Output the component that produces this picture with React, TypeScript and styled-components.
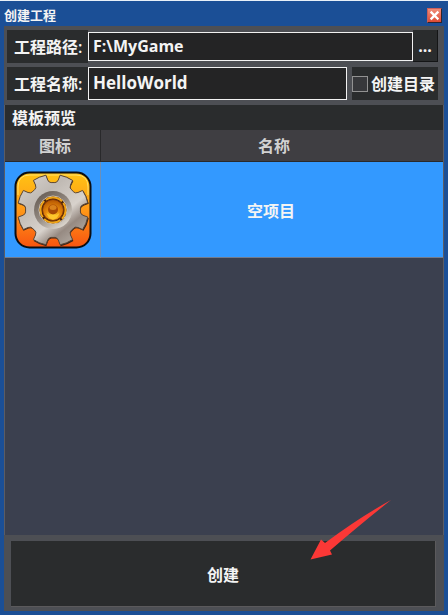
import React, { useState } from "react";
import styled, { createGlobalStyle } from "styled-components";

const Global = createGlobalStyle`
  * { box-sizing: border-box; }
  body { margin: 0; background: #1b4f96; }
  body, button, input, table {
    font-family: "Open Sans", "Noto Sans CJK SC", sans-serif;
    font-size: 16px;
    font-weight: 600;
    line-height: 24px;
    color: #f4f4f4;
  }
`;

const Dialog = styled.main`
  display: flex;
  flex-direction: column;
  min-height: 100vh;
  padding: 0 4px 4px;
  border-top: 1px solid #e8f0f8;
  background: #1b4f96;
`;

const TitleBar = styled.header`
  display: flex;
  align-items: center;
  justify-content: space-between;
  height: 25px;
  padding: 3px 2px 0 0;
`;

const Title = styled.h1`
  margin: 0;
  font-size: 13px;
  line-height: 20px;
  font-weight: 600;
`;

const CloseButton = styled.button`
  display: flex;
  padding: 0;
  border: 1px solid #30242c;
  border-color: #c9605c #30242c #30242c #c9605c;
  background: linear-gradient(#f08c78, #dc4a34);
`;

const Body = styled.form`
  flex: 1;
  display: flex;
  flex-direction: column;
  background: #4d4f54;
`;

const Fields = styled.div`
  display: flex;
  flex-direction: column;
  gap: 4px;
  padding: 4px 6px 5px 3px;
`;

const FieldRow = styled.div`
  display: flex;
  height: 33px;
`;

const FieldLabel = styled.label`
  flex: none;
  display: flex;
  align-items: center;
  width: 81px;
  padding-left: 7px;
  background: #2a2c2d;
`;

const TextBox = styled.input<{ $compact?: boolean }>`
  flex: 1;
  min-width: 0;
  margin: ${(p) => (p.$compact ? "2px 0" : "0")};
  padding: 0 4px 2px;
  border: 1px solid #f2f2f2;
  border-radius: 0;
  outline: none;
  font-size: ${(p) => (p.$compact ? "16px" : "17px")};
  font-weight: 700;
  background: #242425;
`;

const BrowseButton = styled.button`
  flex: none;
  width: 25px;
  margin-bottom: 1px;
  padding: 0;
  border: solid #141516;
  border-width: 0 1px 1px 0;
  font-weight: 700;
  background: #2a2c2d;
`;

const CheckLabel = styled.label`
  flex: none;
  display: flex;
  align-items: center;
  gap: 3px;
  width: 86px;
  margin-left: 5px;
  background: #2a2c2d;
`;

const Checkbox = styled.input`
  appearance: none;
  flex: none;
  width: 16px;
  height: 16px;
  margin: 0;
  border: 1px solid #929292;
  background: #37383b;
  &:checked { background: #3399ff; }
`;

const Preview = styled.section`
  flex: 1;
  display: flex;
  flex-direction: column;
  background: #3b404f;
  border: solid #5b5c63;
  border-width: 0 1px 0 1px;
`;

const PreviewTitle = styled.h2`
  margin: 0;
  padding: 1px 7px 0;
  font-size: 16px;
  line-height: 24px;
  font-weight: 600;
  background: #2a2c2d;
`;

const TemplateTable = styled.table`
  width: 100%;
  table-layout: fixed;
  border-collapse: separate;
  border-spacing: 0;
`;

const HeadCell = styled.th<{ $icon?: boolean }>`
  width: ${(p) => (p.$icon ? "96px" : "auto")};
  height: 32px;
  padding: ${(p) => (p.$icon ? "0 0 0 5px" : "0 0 0 4px")};
  border-right: ${(p) => (p.$icon ? "1px solid #29292b" : "0")};
  border-bottom: 1px solid #29292b;
  font-weight: 600;
  color: #d2d2d2;
  background: #3f3e42;
`;

const Cell = styled.td<{ $icon?: boolean }>`
  height: 96px;
  padding: ${(p) => (p.$icon ? "0" : "2px 2px 0 0")};
  border-right: ${(p) => (p.$icon ? "1px solid #6c8fb8" : "0")};
  border-bottom: 1px solid #737b8c;
  text-align: center;
  background: #3399ff;
  svg { display: block; margin: auto; }
`;

const Footer = styled.footer`
  position: relative;
  padding: 6px 8px 4px 7px;
`;

const CreateButton = styled.button`
  display: block;
  width: 100%;
  height: 66px;
  padding: 2px 0 0;
  border: 1px solid #5b5a5c;
  border-width: 0 1px 1px 0;
  background: #2a2c2d;
`;

const Arrow = styled.svg`
  position: absolute;
  right: 52px;
  bottom: 50px;
  pointer-events: none;
`;

function gearPath(cx: number, cy: number, tip: number, root: number) {
  const at = (deg: number, r: number) => {
    const a = ((deg - 90) * Math.PI) / 180;
    return `${(cx + r * Math.cos(a)).toFixed(2)} ${(cy + r * Math.sin(a)).toFixed(2)}`;
  };
  let d = `M${at(11.5, tip)}`;
  for (let i = 0; i < 8; i++) {
    const c = 22.5 + i * 45;
    const n = c + 22.5;
    d += ` A${tip} ${tip} 0 0 1 ${at(c + 11, tip)}`;
    d += ` L${at(n - 10, root + 3)} Q${at(n - 8, root)} ${at(n - 4, root)}`;
    d += ` L${at(n + 4, root)} Q${at(n + 8, root)} ${at(n + 10, root + 3)}`;
    d += ` L${at(n + 11.5, tip)}`;
  }
  return d + "Z";
}

const GearIcon = () => (
  <svg width="78" height="78" viewBox="0 0 78 78" role="img" aria-label="空项目">
    <defs>
      <linearGradient id="tile" x1="0" y1="0" x2="0" y2="1">
        <stop offset="0" stopColor="#ffc414" />
        <stop offset="0.5" stopColor="#ff9818" />
        <stop offset="1" stopColor="#f85410" />
      </linearGradient>
      <linearGradient id="metal" x1="0" y1="0" x2="0.8" y2="1">
        <stop offset="0" stopColor="#d8d4d0" />
        <stop offset="0.35" stopColor="#c0bab4" />
        <stop offset="0.65" stopColor="#d8d2cc" />
        <stop offset="0.8" stopColor="#968a82" />
        <stop offset="1" stopColor="#b4aca4" />
      </linearGradient>
      <linearGradient id="dish" x1="0" y1="0" x2="0.7" y2="1">
        <stop offset="0" stopColor="#5e544c" />
        <stop offset="0.55" stopColor="#91877e" />
        <stop offset="1" stopColor="#ded8d0" />
      </linearGradient>
      <radialGradient id="core" cx="0.5" cy="0.75" r="0.7">
        <stop offset="0" stopColor="#ffd630" />
        <stop offset="0.5" stopColor="#e88a0c" />
        <stop offset="1" stopColor="#b85a04" />
      </radialGradient>
    </defs>
    <rect x="1.5" y="1.5" width="75" height="75" rx="14" fill="url(#tile)" stroke="#0c0e12" strokeWidth="2" />
    <path d="M4 24V16Q4 4 16 4H62Q74 4 74 16V24" fill="none" stroke="#ffdf68" strokeWidth="1" />
    <path d={gearPath(39.5, 40, 36, 27.5)} fill="#3b241a" />
    <path d={gearPath(39, 39, 35.5, 27.5)} fill="url(#metal)" stroke="#5b4634" strokeWidth="1" />
    <circle cx="39" cy="39" r="19" fill="url(#dish)" />
    <circle cx="39" cy="39" r="14" fill="#4b2408" stroke="#cfc6bc" strokeWidth="1" />
    <circle cx="39" cy="39" r="12.5" fill="none" stroke="#f0a418" strokeWidth="2" strokeDasharray="17.6 2.03" strokeDashoffset="8" />
    <circle cx="39" cy="39" r="10.5" fill="url(#core)" stroke="#7e3304" strokeWidth="1" />
    <circle cx="39" cy="38.5" r="5" fill="#a84a05" />
    <ellipse cx="39" cy="36.5" rx="3.5" ry="2.5" fill="#d9821c" />
    <path d="M32.5 42Q39 47.5 45.5 42Q43 48.5 39 48.5T32.5 42Z" fill="#ffc62c" />
  </svg>
);

const CloseIcon = () => (
  <svg width="13" height="13" viewBox="0 0 13 13" aria-hidden="true">
    <path d="M3.5 3.5L9.5 9.5M9.5 3.5L3.5 9.5" stroke="#ffffff" strokeWidth="2.4" strokeLinecap="square" />
  </svg>
);

export default function App() {
  const [path, setPath] = useState("F:\\MyGame");
  const [name, setName] = useState("HelloWorld");
  return (
    <>
      <Global />
      <Dialog>
        <TitleBar>
          <Title>创建工程</Title>
          <CloseButton type="button" aria-label="关闭"><CloseIcon /></CloseButton>
        </TitleBar>
        <Body onSubmit={(e) => e.preventDefault()}>
          <Fields>
            <FieldRow>
              <FieldLabel htmlFor="path">工程路径:</FieldLabel>
              <TextBox id="path" $compact value={path} onChange={(e) => setPath(e.target.value)} />
              <BrowseButton type="button">...</BrowseButton>
            </FieldRow>
            <FieldRow>
              <FieldLabel htmlFor="name">工程名称:</FieldLabel>
              <TextBox id="name" value={name} onChange={(e) => setName(e.target.value)} />
              <CheckLabel>
                <Checkbox type="checkbox" />
                创建目录
              </CheckLabel>
            </FieldRow>
          </Fields>
          <Preview>
            <PreviewTitle>模板预览</PreviewTitle>
            <TemplateTable>
              <thead>
                <tr>
                  <HeadCell $icon scope="col">图标</HeadCell>
                  <HeadCell scope="col">名称</HeadCell>
                </tr>
              </thead>
              <tbody>
                <tr>
                  <Cell $icon><GearIcon /></Cell>
                  <Cell>空项目</Cell>
                </tr>
              </tbody>
            </TemplateTable>
          </Preview>
          <Footer>
            <CreateButton type="submit">创建</CreateButton>
            <Arrow width="82" height="62" viewBox="0 0 82 62" aria-hidden="true">
              <path d="M81 1Q50 18 15 44L11 40.5L0.5 60.5L22 55.5L20 51.5Q52 24 81 1Z" fill="#fb3836" />
            </Arrow>
          </Footer>
        </Body>
      </Dialog>
    </>
  );
}
